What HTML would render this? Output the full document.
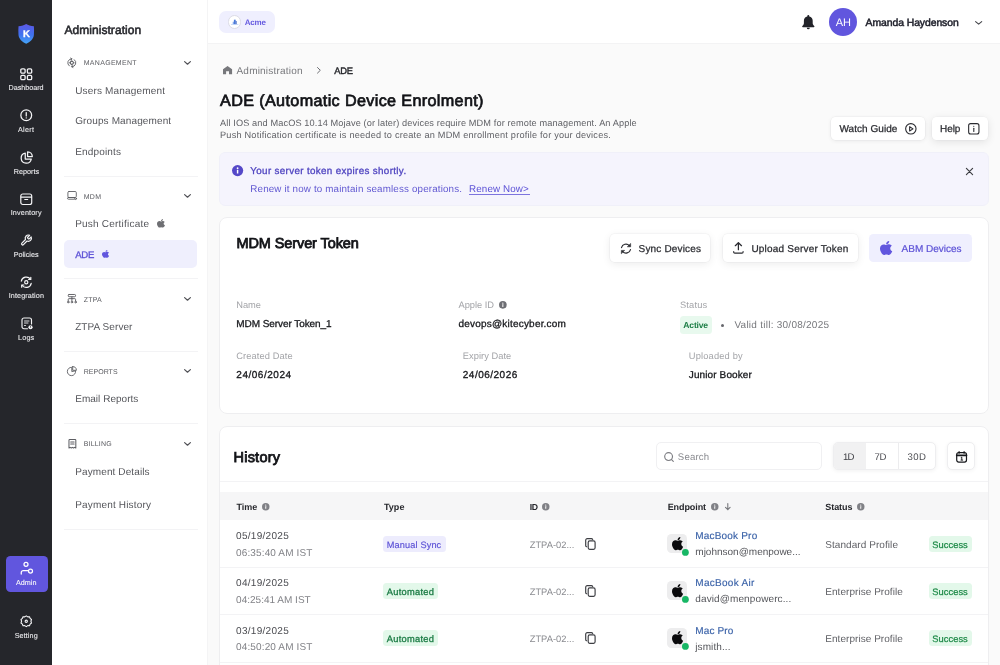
<!DOCTYPE html>
<html lang="en"><head><meta charset="utf-8"><title>ADE (Automatic Device Enrolment)</title>
<style>
*{box-sizing:border-box;margin:0;padding:0}
html,body{text-rendering:geometricPrecision;width:1000px;height:665px;overflow:hidden;background:#fafafa;font-family:"Liberation Sans",sans-serif;color:#1d1d22}
.a{position:absolute;white-space:nowrap;line-height:1}
svg{position:absolute;overflow:visible}
.btn{position:absolute;background:#fff;border-radius:4.5px;box-shadow:0 0 0 .6px rgba(20,20,45,.05),0 1px 4px rgba(0,0,0,.07)}
.card{position:absolute;background:#fff;border:1px solid #eeeef0;border-radius:8px}
#app{position:absolute;left:0;top:0;width:1000px;height:665px;will-change:transform}

</style></head><body>
<div id="app">
<div style="position:absolute;left:0;top:0;width:52px;height:665px;background:#25262b">
<svg style="left:18px;top:23.5px" width="16.4" height="19.8" viewBox="0 0 164 198"><defs><linearGradient id="lg" x1="0" y1="0" x2="0" y2="1"><stop offset="0" stop-color="#5d58e6"/><stop offset=".55" stop-color="#3f72ef"/><stop offset="1" stop-color="#45a6f8"/></linearGradient></defs><path d="M82 0C64 13 36 20 5 22C3 50 3 80 5 110C9 150 42 178 82 198C122 178 155 150 159 110C161 80 161 50 159 22C128 20 100 13 82 0Z" fill="url(#lg)"/></svg>

<!-- Dashboard -->
<svg style="left:20px;top:67.5px" width="12.5" height="12.5" viewBox="0 0 25 25" fill="none" stroke="#f4f4f6" stroke-width="2.6"><rect x="1.6" y="1.6" width="8.6" height="8.6" rx="2.4"/><rect x="14.8" y="1.6" width="8.6" height="8.6" rx="2.4"/><rect x="1.6" y="14.8" width="8.6" height="8.6" rx="2.4"/><rect x="14.8" y="14.8" width="8.6" height="8.6" rx="2.4"/></svg>
<!-- Alert -->
<svg style="left:20px;top:109px" width="12.5" height="12.5" viewBox="0 0 25 25" fill="none" stroke="#f4f4f6" stroke-width="2.5" stroke-linecap="round"><circle cx="12.5" cy="12.5" r="10.8"/><path d="M12.5 7.2v6.6"/><path d="M12.5 17.6v.2"/></svg>
<!-- Reports -->
<svg style="left:20px;top:150.5px" width="13" height="13" viewBox="0 0 26 26" fill="none" stroke="#f4f4f6" stroke-width="2.5" stroke-linecap="round" stroke-linejoin="round"><path d="M10.5 4.2A10.2 10.2 0 1 0 22.6 16H10.5z"/><path d="M15.2 1.6v9.6h9.4A9.6 9.6 0 0 0 15.2 1.6z"/></svg>
<!-- Inventory -->
<svg style="left:20px;top:192.700px" width="12.5" height="12.5" viewBox="0 0 25 25" fill="none" stroke="#f4f4f6" stroke-width="2.4" stroke-linecap="round" stroke-linejoin="round"><rect x="1.6" y="2" width="21.8" height="21" rx="4"/><path d="M2 8.2h21"/><path d="M9.6 13h5.8"/></svg>
<!-- Policies -->
<svg style="left:20px;top:234px" width="12.5" height="12.5" viewBox="0 0 24 24" fill="none" stroke="#f4f4f6" stroke-width="2.3" stroke-linecap="round" stroke-linejoin="round"><path d="M14.7 6.3a1 1 0 0 0 0 1.4l1.6 1.6a1 1 0 0 0 1.4 0l3.77-3.77a6 6 0 0 1-7.94 7.94l-6.91 6.91a2.12 2.12 0 0 1-3-3l6.91-6.91a6 6 0 0 1 7.94-7.94l-3.76 3.76z"/></svg>
<!-- Integration -->
<svg style="left:20px;top:275.5px" width="12.5" height="12.5" viewBox="0 0 25 25" fill="none" stroke="#f4f4f6" stroke-width="2.4" stroke-linecap="round" stroke-linejoin="round"><path d="M2.6 10.400A10.200 10.200 0 0 1 21 6.500"/><path d="M22.400 14.600A10.200 10.200 0 0 1 4 18.500"/><path d="M21.600 2.600v4.400h-4.400"/><path d="M3.400 22.400V18h4.400"/><circle cx="12.500" cy="12.500" r="3.200"/></svg>
<!-- Logs -->
<svg style="left:20.500px;top:317px" width="12.500" height="13" viewBox="0 0 25 26" fill="none" stroke="#f4f4f6" stroke-width="2.300" stroke-linecap="round" stroke-linejoin="round"><path d="M13 23.500H6a4 4 0 0 1-4-4V6a4 4 0 0 1 4-4h11a4 4 0 0 1 4 4v8"/><path d="M7 8h9M7 12h7M7 17h2" stroke-width="1.800"/><circle cx="19" cy="20.500" r="4.200" fill="#f4f4f6" stroke="none"/><path d="M19 18.500v2.200" stroke="#25262b" stroke-width="1.300"/></svg>
<!-- Admin -->
<div style="position:absolute;left:6px;top:556px;width:41.500px;height:36px;border-radius:4.500px;background:#6156de"></div>
<svg style="left:19.500px;top:561px" width="14" height="14" viewBox="0 0 28 28" fill="none" stroke="#fff" stroke-width="2.500" stroke-linecap="round" stroke-linejoin="round"><circle cx="12" cy="6.500" r="4"/><circle cx="21" cy="20" r="4"/><path d="M2.500 26v-3a4 4 0 0 1 4-4h10"/></svg>
<!-- Setting -->
<svg style="left:20px;top:614.800px" width="12.500" height="12.500" viewBox="0 0 25 25" fill="none" stroke="#f4f4f6" stroke-width="2.200" stroke-linejoin="round"><path d="M12.500 1.800l3 1.900 3.500-.2 1.200 3.300 2.800 2.100-1.100 3.600 1.100 3.600-2.800 2.100-1.200 3.300-3.500-.2-3 1.900-3-1.900-3.500.2-1.200-3.300-2.800-2.100 1.100-3.600-1.100-3.600 2.800-2.100 1.200-3.300 3.500.2z"/><circle cx="12.500" cy="12.500" r="2.300"/></svg>
</div><span class="a" style="left:22.9px;top:30px;font-size:9.6px;color:#fff;font-weight:700;-webkit-text-stroke:.3px #fff;">K</span><span class="a" style="left:8.5px;top:84px;font-size:7.2px;color:#ececef;letter-spacing:-0.020px;-webkit-text-stroke:.1px #ececef;">Dashboard</span><span class="a" style="left:18px;top:126px;font-size:7.2px;color:#ececef;letter-spacing:0.315px;-webkit-text-stroke:.1px #ececef;">Alert</span><span class="a" style="left:13.7px;top:168px;font-size:7.2px;color:#ececef;letter-spacing:0.050px;-webkit-text-stroke:.1px #ececef;">Reports</span><span class="a" style="left:10.7px;top:209px;font-size:7.2px;color:#ececef;letter-spacing:0.156px;-webkit-text-stroke:.1px #ececef;">Inventory</span><span class="a" style="left:13.7px;top:251px;font-size:7.2px;color:#ececef;letter-spacing:0.016px;-webkit-text-stroke:.1px #ececef;">Policies</span><span class="a" style="left:8.7px;top:292px;font-size:7.2px;color:#ececef;letter-spacing:0.127px;-webkit-text-stroke:.1px #ececef;">Integration</span><span class="a" style="left:18.1px;top:334px;font-size:7.2px;color:#ececef;letter-spacing:0.145px;-webkit-text-stroke:.1px #ececef;">Logs</span><span class="a" style="left:16px;top:579px;font-size:7.2px;color:#fff;letter-spacing:0.006px;-webkit-text-stroke:.1px #ececef;">Admin</span><span class="a" style="left:14.7px;top:632px;font-size:7.2px;color:#ececef;letter-spacing:0.094px;-webkit-text-stroke:.1px #ececef;">Setting</span><div style="position:absolute;left:52px;top:0;width:156px;height:665px;background:#fff;border-right:1px solid #f4f4f5"></div><span class="a" style="left:64.4px;top:24px;font-size:12px;color:#26272c;letter-spacing:0.057px;-webkit-text-stroke:.55px #26272c;">Administration</span><svg style="left:67.200px;top:57.700px" width="9.600" height="9.600" viewBox="0 0 20 20" fill="none" stroke="#5c5d62" stroke-linecap="round" stroke-linejoin="round" stroke-width="1.900"><path d="M10 1.700A8.300 8.300 0 0 0 4.800 16.500"/><path d="M10 18.300A8.300 8.300 0 0 0 15.200 3.500"/><path d="M7.600 .2L10.200 1.700 8.400 4"/><path d="M12.400 19.800L9.800 18.300l1.800-2.300"/><circle cx="10" cy="10" r="3.300" stroke-width="2.200"/><path d="M10 5v1.600M10 13.400V15M5 10h1.600M13.400 10H15" stroke-width="1.600"/></svg><span class="a" style="left:83.7px;top:60px;font-size:7px;color:#5a5b60;letter-spacing:0.308px;">MANAGEMENT</span><svg style="left:184.1px;top:60.9px" width="7" height="3.8" viewBox="0 0 7 3.8" fill="none" stroke="#505156" stroke-width="1.2" stroke-linecap="round" stroke-linejoin="round"><path d="M.6 .6L3.5 3.2L6.4 .6"/></svg><span class="a" style="left:75.2px;top:87px;font-size:10px;color:#55565b;letter-spacing:0.164px;">Users Management</span><span class="a" style="left:75.2px;top:117px;font-size:10px;color:#55565b;letter-spacing:0.124px;">Groups Management</span><span class="a" style="left:75.2px;top:148px;font-size:10px;color:#55565b;letter-spacing:0.167px;">Endpoints</span><div style="position:absolute;left:64px;top:175.6px;width:133.5px;height:1px;background:#f3f3f5;border-radius:0px;"></div><svg style="left:67px;top:191.400px" width="10" height="9" viewBox="0 0 20 18" fill="none" stroke="#5c5d62" stroke-linecap="round" stroke-linejoin="round" stroke-width="1.800"><rect x="1.800" y="1" width="16.800" height="12" rx="2.200"/><rect x="1" y="13" width="15.500" height="3.400" rx="1.700"/><circle cx="17.300" cy="15.300" r="1.800" fill="#fff"/></svg><span class="a" style="left:83.7px;top:194px;font-size:7px;color:#5a5b60;letter-spacing:0.353px;">MDM</span><svg style="left:184.1px;top:194.3px" width="7" height="3.8" viewBox="0 0 7 3.8" fill="none" stroke="#505156" stroke-width="1.2" stroke-linecap="round" stroke-linejoin="round"><path d="M.6 .6L3.5 3.2L6.4 .6"/></svg><span class="a" style="left:75.2px;top:220px;font-size:10px;color:#55565b;letter-spacing:0.213px;">Push Certificate</span><svg style="left:157.3px;top:219.2px" width="7.8" height="8.6" viewBox="4 32 368.6 448" preserveAspectRatio="none"><path fill="#6e6f73" d="M318.7 268.7c-.2-36.700 16.400-64.400 50-84.800-18.800-26.900-47.200-41.700-84.700-44.600-35.500-2.800-74.300 20.700-88.500 20.700-15 0-49.400-19.700-76.400-19.700C63.300 141.200 4 184.800 4 273.500q0 39.300 14.400 81.200c12.800 36.700 59 126.700 107.200 125.200 25.200-.6 43-17.900 75.800-17.900 31.800 0 48.300 17.900 76.400 17.900 48.600-.7 90.400-82.500 102.600-119.300-65.200-30.700-61.700-90-61.700-91.900zm-56.600-164.200c27.300-32.400 24.800-61.900 24-72.500-24.100 1.400-52 16.400-67.900 34.900-17.500 19.800-27.800 44.300-25.600 71.900 26.100 2 49.900-11.400 69.500-34.300z"/></svg><div style="position:absolute;left:64.3px;top:240.2px;width:132.8px;height:28px;background:#efeffd;border-radius:5px;"></div><span class="a" style="left:75.2px;top:251px;font-size:9.6px;color:#5b50d6;letter-spacing:-0.214px;-webkit-text-stroke:.3px #5b50d6;">ADE</span><svg style="left:102px;top:250px" width="7" height="7.8" viewBox="4 32 368.6 448" preserveAspectRatio="none"><path fill="#6156de" d="M318.7 268.7c-.2-36.700 16.400-64.400 50-84.800-18.800-26.900-47.200-41.700-84.700-44.600-35.500-2.800-74.300 20.700-88.500 20.700-15 0-49.400-19.700-76.400-19.700C63.300 141.200 4 184.800 4 273.500q0 39.300 14.400 81.200c12.800 36.700 59 126.700 107.200 125.200 25.200-.6 43-17.900 75.800-17.900 31.800 0 48.300 17.900 76.400 17.900 48.600-.7 90.400-82.500 102.600-119.300-65.200-30.700-61.700-90-61.700-91.900zm-56.600-164.200c27.300-32.400 24.800-61.900 24-72.500-24.100 1.400-52 16.400-67.900 34.900-17.500 19.800-27.800 44.300-25.600 71.900 26.100 2 49.900-11.400 69.500-34.300z"/></svg><div style="position:absolute;left:64px;top:278.4px;width:133.5px;height:1px;background:#f3f3f5;border-radius:0px;"></div><svg style="left:67.200px;top:294.100px" width="9.800" height="9.600" viewBox="0 0 20 19.600" fill="none" stroke="#5c5d62" stroke-linecap="round" stroke-linejoin="round" stroke-width="1.900"><rect x="2.600" y="1" width="14.800" height="4.600" rx="1.600"/><path d="M10 5.500v4M2.500 14v-3a1.500 1.500 0 0 1 1.500-1.500h12a1.500 1.500 0 0 1 1.500 1.500v3M10 9.500V14"/><circle cx="2.500" cy="16.500" r="1.600"/><circle cx="10" cy="16.500" r="1.600"/><circle cx="17.500" cy="16.500" r="1.600"/></svg><span class="a" style="left:83.7px;top:297px;font-size:7px;color:#5a5b60;letter-spacing:0.236px;">ZTPA</span><svg style="left:184.1px;top:297.4px" width="7" height="3.8" viewBox="0 0 7 3.8" fill="none" stroke="#505156" stroke-width="1.2" stroke-linecap="round" stroke-linejoin="round"><path d="M.6 .6L3.5 3.2L6.4 .6"/></svg><span class="a" style="left:75.2px;top:323px;font-size:10px;color:#55565b;letter-spacing:0.076px;">ZTPA Server</span><div style="position:absolute;left:64px;top:350.7px;width:133.5px;height:1px;background:#f3f3f5;border-radius:0px;"></div><svg style="left:67px;top:366.200px" width="10" height="10" viewBox="0 0 20 20" fill="none" stroke="#5c5d62" stroke-linecap="round" stroke-linejoin="round" stroke-width="1.800"><path d="M17.300 10.400A8.300 8.300 0 1 1 9.600 2.700V10.400z"/><path d="M11.400 1.200v7.400h7.400A7.400 7.400 0 0 0 11.400 1.200z"/></svg><span class="a" style="left:83.7px;top:369px;font-size:7px;color:#5a5b60;letter-spacing:0.028px;">REPORTS</span><svg style="left:184.1px;top:369.4px" width="7" height="3.8" viewBox="0 0 7 3.8" fill="none" stroke="#505156" stroke-width="1.2" stroke-linecap="round" stroke-linejoin="round"><path d="M.6 .6L3.5 3.2L6.4 .6"/></svg><span class="a" style="left:75.2px;top:395px;font-size:10px;color:#55565b;letter-spacing:0.031px;">Email Reports</span><div style="position:absolute;left:64px;top:423px;width:133.5px;height:1px;background:#f3f3f5;border-radius:0px;"></div><svg style="left:67.700px;top:438.600px" width="8.800" height="9.600" viewBox="0 0 18 19.600" fill="none" stroke="#5c5d62" stroke-linecap="round" stroke-linejoin="round" stroke-width="2.100"><path d="M2 18.500V2.500A1.500 1.500 0 0 1 3.500 1h11A1.500 1.500 0 0 1 16 2.500v16l-2.300-1.500-2.400 1.500L9 17l-2.300 1.500L4.300 17z"/><path d="M5.500 6h7M5.500 10h7"/></svg><span class="a" style="left:83.7px;top:441px;font-size:7px;color:#5a5b60;letter-spacing:0.191px;">BILLING</span><svg style="left:184.1px;top:441.5px" width="7" height="3.8" viewBox="0 0 7 3.8" fill="none" stroke="#505156" stroke-width="1.2" stroke-linecap="round" stroke-linejoin="round"><path d="M.6 .6L3.5 3.2L6.4 .6"/></svg><span class="a" style="left:75.2px;top:468px;font-size:10px;color:#55565b;letter-spacing:0.116px;">Payment Details</span><span class="a" style="left:75.2px;top:501px;font-size:10px;color:#55565b;letter-spacing:0.168px;">Payment History</span><div style="position:absolute;left:64px;top:528.5px;width:133.5px;height:1px;background:#f3f3f5;border-radius:0px;"></div><div style="position:absolute;left:208px;top:0;width:792px;height:43.500px;background:#fff;border-bottom:1px solid #f3f3f4"></div><div style="position:absolute;left:219px;top:11px;width:56px;height:22.2px;background:#efeffe;border-radius:7px;"></div><div style="position:absolute;left:227.700px;top:15.100px;width:13.600px;height:13.600px;border-radius:50%;background:#fff;border:.8px solid #dcdce6"></div><svg style="left:231px;top:18.600px" width="7.400" height="6.200" viewBox="-1.200 0 14.800 11.600"><rect x="4.600" y="1" width="3.600" height="9" fill="#4a78d8"/><rect x="2.300" y="5" width="2.300" height="5" fill="#7aa0ea"/><rect x="8.200" y="3.600" width="1.800" height="6.400" fill="#2f5cc0"/><rect x="-1.200" y="10" width="14.800" height="1" fill="#9dbcf3"/></svg><span class="a" style="left:244.7px;top:19px;font-size:8px;color:#675ce0;font-weight:700;letter-spacing:-0.199px;">Acme</span><svg style="left:802.200px;top:15.100px" width="12.600" height="14.300" viewBox="0 0 25.200 28.600"><path fill="#222329" d="M12.600 0a2 2 0 0 0-2 2v.9C6.200 3.800 3.800 7.400 3.800 11.500v5.200c0 1.500-.6 2.900-1.600 4L.7 22.200c-.8.800-.2 2.200.9 2.200h22c1.100 0 1.700-1.400.9-2.200L23 20.700c-1-1.100-1.600-2.500-1.600-4v-5.200c0-4.100-2.400-7.700-6.800-8.600V2a2 2 0 0 0-2-2zM9.600 25.600a3 3 0 0 0 6 0z"/></svg><div style="position:absolute;left:829px;top:8px;width:28px;height:28px;background:#6156de;border-radius:14px;"></div><span class="a" style="left:835.8px;top:18px;font-size:11px;color:#fff;letter-spacing:-0.121px;">AH</span><span class="a" style="left:865.6px;top:19px;font-size:10.4px;color:#1e1f2a;letter-spacing:-0.068px;-webkit-text-stroke:.5px #1e1f2a;">Amanda Haydenson</span><svg style="left:974.85px;top:20.5px" width="7.3" height="3.8" viewBox="0 0 7.3 3.8" fill="none" stroke="#44454a" stroke-width="1.1" stroke-linecap="round" stroke-linejoin="round"><path d="M.6 .6L3.65 3.2L6.7 .6"/></svg><svg style="left:223.100px;top:66.300px" width="9.100" height="8.200" viewBox="0 0 18.200 16.400"><path fill="#77787c" d="M9.100 0L0 6.600V16.400h6.200v-6h5.800v6h6.200V6.600z"/></svg><span class="a" style="left:236.5px;top:67px;font-size:10px;color:#77787c;letter-spacing:0.203px;">Administration</span><svg style="left:317.200px;top:67.200px" width="3.800" height="6.600" viewBox="0 0 3.800 6.600" fill="none" stroke="#6a6b70" stroke-width="1" stroke-linecap="round" stroke-linejoin="round"><path d="M.5 .5L3.300 3.300.5 6.100"/></svg><span class="a" style="left:334.3px;top:66px;font-size:9.4px;color:#222328;letter-spacing:-0.233px;-webkit-text-stroke:.35px #222328;">ADE</span><span class="a" style="left:220.1px;top:93px;font-size:16.2px;color:#121317;letter-spacing:0.343px;-webkit-text-stroke:.7px #121317;">ADE (Automatic Device Enrolment)</span><span class="a" style="left:220px;top:119px;font-size:9.2px;color:#606166;letter-spacing:0.117px;">All IOS and MacOS 10.14 Mojave (or later) devices require MDM for remote management. An Apple</span><span class="a" style="left:220px;top:131px;font-size:9.2px;color:#606166;letter-spacing:0.207px;">Push Notification certificate is needed to create an MDM enrollment profile for your devices.</span><div class="btn" style="left:831px;top:117px;width:94px;height:23px"></div><span class="a" style="left:839.4px;top:125px;font-size:10px;color:#2a2b30;letter-spacing:0.054px;-webkit-text-stroke:.25px #2a2b30;">Watch Guide</span><svg style="left:904.600px;top:122.600px" width="11.700" height="11.700" viewBox="0 0 23.400 23.400" fill="none" stroke="#2a2b30" stroke-width="2.200" stroke-linejoin="round"><circle cx="11.700" cy="11.700" r="10.400"/><path d="M9.300 7.400v8.600l6.700-4.300z"/></svg><div class="btn" style="left:932px;top:117px;width:56px;height:23px;box-shadow:0 0 0 .6px rgba(20,20,45,.04),0 2px 9px rgba(0,0,0,.1)"></div><span class="a" style="left:940px;top:125px;font-size:10px;color:#2a2b30;letter-spacing:-0.051px;-webkit-text-stroke:.25px #2a2b30;">Help</span><svg style="left:968px;top:122.600px" width="11.600" height="11.600" viewBox="0 0 23.200 23.200" fill="none" stroke="#2a2b30" stroke-width="2.200" stroke-linejoin="round" stroke-linecap="round"><rect x="1.300" y="1.300" width="20.600" height="20.600" rx="4"/><path d="M11.600 10.600v6.200"/><path d="M11.600 6.400v.3"/></svg><div style="position:absolute;left:219px;top:152px;width:770px;height:54px;background:#f5f4fd;border:1px solid #f0f0f9;border-radius:6px"></div><svg style="left:231.8px;top:164.6px" width="11.2" height="11.2" viewBox="0 0 20 20"><circle cx="10" cy="10" r="10" fill="#5548c8"/><rect x="8.700" y="8.400" width="2.600" height="7" rx=".6" fill="#fff"/><circle cx="10" cy="5.600" r="1.600" fill="#fff"/></svg><span class="a" style="left:250.3px;top:167px;font-size:9.8px;color:#4f44c0;letter-spacing:0.349px;-webkit-text-stroke:.3px #4f44c0;">Your server token expires shortly.</span><span class="a" style="left:250.3px;top:185px;font-size:9.8px;color:#6259d2;letter-spacing:0.158px;">Renew it now to maintain seamless operations.</span><span class="a" style="left:469.1px;top:185px;font-size:9.8px;color:#5b50d6;letter-spacing:0.121px;">Renew Now&gt;</span><div style="position:absolute;left:469px;top:193.5px;width:60.5px;height:0.9px;background:#7d74de;border-radius:0px;"></div><svg style="left:966px;top:168.100px" width="7" height="7" viewBox="0 0 7 7" fill="none" stroke="#3c3d42" stroke-width="1.150" stroke-linecap="round"><path d="M.4 .4l6.200 6.200M6.600 .4L.4 6.600"/></svg><div class="card" style="left:219px;top:217px;width:770px;height:197px"></div><span class="a" style="left:236.4px;top:237px;font-size:14.5px;color:#121317;letter-spacing:-0.092px;-webkit-text-stroke:.8px #121317;">MDM Server Token</span><div class="btn" style="left:610px;top:234px;width:100px;height:28px;box-shadow:0 0 0 .6px rgba(20,20,45,.05),0 2px 8px rgba(0,0,0,.08)"></div><svg style="left:620px;top:243px" width="12" height="11.200" viewBox="0 0 24 22.400" fill="none" stroke="#2a2b30" stroke-width="2.300" stroke-linecap="round" stroke-linejoin="round"><path d="M3 9.300A9.200 9.200 0 0 1 18.600 5.200"/><path d="M21 13.100A9.200 9.200 0 0 1 5.400 17.200"/><path d="M21.300 1.600V7.600h-6z" fill="#2a2b30" stroke-width="1.200"/><path d="M2.700 20.800v-6h6z" fill="#2a2b30" stroke-width="1.200"/></svg><span class="a" style="left:638.6px;top:245px;font-size:10px;color:#2a2b30;letter-spacing:0.158px;-webkit-text-stroke:.25px #2a2b30;">Sync Devices</span><div class="btn" style="left:723px;top:234px;width:135px;height:28px;box-shadow:0 0 0 .6px rgba(20,20,45,.05),0 2px 8px rgba(0,0,0,.08)"></div><svg style="left:733.200px;top:242px" width="10.800" height="11.800" viewBox="0 0 21.600 23.600" fill="none" stroke="#2a2b30" stroke-width="2.500" stroke-linecap="round" stroke-linejoin="round"><path d="M10.800 15.500V2"/><path d="M4.600 7.400l6.200-6 6.200 6"/><path d="M1.400 19v1a2.200 2.200 0 0 0 2.200 2.200h14.400a2.200 2.200 0 0 0 2.200-2.200v-1" stroke-width="2.300"/></svg><span class="a" style="left:751.4px;top:245px;font-size:10px;color:#2a2b30;letter-spacing:0.205px;-webkit-text-stroke:.25px #2a2b30;">Upload Server Token</span><div style="position:absolute;left:869px;top:234px;width:103.4px;height:28px;background:#efeffe;border-radius:4.5px;"></div><svg style="left:880.2px;top:241px" width="12" height="14" viewBox="4 32 368.6 448" preserveAspectRatio="none"><path fill="#6156de" d="M318.7 268.7c-.2-36.700 16.400-64.400 50-84.800-18.800-26.900-47.200-41.700-84.700-44.600-35.500-2.800-74.300 20.700-88.500 20.700-15 0-49.400-19.700-76.400-19.700C63.300 141.200 4 184.800 4 273.500q0 39.300 14.400 81.200c12.800 36.700 59 126.700 107.200 125.200 25.200-.6 43-17.900 75.800-17.900 31.800 0 48.300 17.900 76.400 17.900 48.600-.7 90.400-82.500 102.600-119.300-65.200-30.700-61.700-90-61.700-91.900zm-56.600-164.200c27.300-32.400 24.800-61.900 24-72.500-24.100 1.400-52 16.400-67.900 34.900-17.500 19.800-27.800 44.300-25.600 71.900 26.100 2 49.900-11.400 69.500-34.300z"/></svg><span class="a" style="left:901.6px;top:245px;font-size:10px;color:#5b50d6;-webkit-text-stroke:.2px #5b50d6;">ABM Devices</span><span class="a" style="left:236.3px;top:301px;font-size:9.3px;color:#a3a4a8;letter-spacing:-0.089px;">Name</span><span class="a" style="left:458.5px;top:301px;font-size:9.3px;color:#a3a4a8;letter-spacing:-0.023px;">Apple ID</span><svg style="left:498.75px;top:301.35px" width="7.7" height="7.7" viewBox="0 0 20 20"><circle cx="10" cy="10" r="10" fill="#6e6f74"/><rect x="8.700" y="8.400" width="2.600" height="7" rx=".6" fill="#fff"/><circle cx="10" cy="5.600" r="1.600" fill="#fff"/></svg><span class="a" style="left:679.9px;top:301px;font-size:9.3px;color:#a3a4a8;letter-spacing:0.189px;">Status</span><span class="a" style="left:236.3px;top:320px;font-size:10px;color:#17181c;letter-spacing:-0.070px;-webkit-text-stroke:.3px #17181c;">MDM Server Token_1</span><span class="a" style="left:458.5px;top:320px;font-size:10px;color:#17181c;letter-spacing:0.204px;-webkit-text-stroke:.3px #17181c;">devops@kitecyber.com</span><div style="position:absolute;left:679.7px;top:315.9px;width:31.9px;height:17.8px;background:#e8f9ee;border-radius:3.5px;"></div><span class="a" style="left:683.3px;top:321px;font-size:8.6px;color:#1f7f48;font-weight:700;letter-spacing:-0.199px;">Active</span><svg style="left:721.400px;top:323.800px" width="3" height="3" viewBox="0 0 10 10"><circle cx="5" cy="5" r="5" fill="#66676c"/></svg><span class="a" style="left:734.4px;top:321px;font-size:10px;color:#77787c;letter-spacing:0.255px;">Valid till: 30/08/2025</span><span class="a" style="left:236.3px;top:352px;font-size:9.3px;color:#a3a4a8;letter-spacing:0.096px;">Created Date</span><span class="a" style="left:462.8px;top:352px;font-size:9.3px;color:#a3a4a8;letter-spacing:0.042px;">Expiry Date</span><span class="a" style="left:688.8px;top:352px;font-size:9.3px;color:#a3a4a8;letter-spacing:0.170px;">Uploaded by</span><span class="a" style="left:236.3px;top:371px;font-size:10px;color:#17181c;letter-spacing:0.520px;-webkit-text-stroke:.3px #17181c;">24/06/2024</span><span class="a" style="left:462.8px;top:371px;font-size:10px;color:#17181c;letter-spacing:0.488px;-webkit-text-stroke:.3px #17181c;">24/06/2026</span><span class="a" style="left:688.8px;top:371px;font-size:10px;color:#17181c;letter-spacing:0.112px;-webkit-text-stroke:.3px #17181c;">Junior Booker</span><div class="card" style="left:219px;top:426px;width:770px;height:260px"></div><span class="a" style="left:233.5px;top:451px;font-size:14.5px;color:#121317;letter-spacing:0.227px;-webkit-text-stroke:.8px #121317;">History</span><div style="position:absolute;left:655.600px;top:442px;width:166.200px;height:28px;background:#fff;border:1px solid #f0f0f2;border-radius:5px"></div><svg style="left:663.900px;top:451.600px" width="9.900" height="9.900" viewBox="0 0 19.800 19.800" fill="none" stroke="#7c7d82" stroke-width="2.300" stroke-linecap="round"><circle cx="9.200" cy="9.200" r="7.800"/><path d="M15.200 15.200l3.400 3.400"/></svg><span class="a" style="left:677.8px;top:453px;font-size:9.6px;color:#8a8b90;letter-spacing:0.199px;">Search</span><div style="position:absolute;left:833px;top:442px;width:102.800px;height:28px;background:#fff;border:1px solid #eeeef0;border-radius:5px;box-shadow:0 1px 4px rgba(0,0,0,.06);overflow:hidden"><div style="position:absolute;left:0;top:0;width:31.800px;height:100%;background:#f1f1f2"></div><div style="position:absolute;left:64.200px;top:0;width:1px;height:100%;background:#ececee"></div></div><span class="a" style="left:842.9px;top:453px;font-size:9.6px;color:#3e3f44;letter-spacing:-0.710px;">1D</span><span class="a" style="left:874.4px;top:453px;font-size:9.6px;color:#4e4f54;letter-spacing:-0.110px;">7D</span><span class="a" style="left:907.6px;top:453px;font-size:9.6px;color:#4e4f54;letter-spacing:0.356px;">30D</span><div style="position:absolute;left:947px;top:442px;width:28px;height:28px;background:#fff;border:1px solid #eeeef0;border-radius:5px;box-shadow:0 1px 4px rgba(0,0,0,.05)"></div><svg style="left:955.800px;top:450.600px" width="11.200" height="11.800" viewBox="0 0 22.400 23.600" fill="none" stroke="#17181c" stroke-width="2.400" stroke-linecap="round" stroke-linejoin="round"><rect x="1.400" y="3.400" width="19.600" height="18.800" rx="4"/><path d="M1.400 8.600h19.600" stroke-width="3.400"/><path d="M6.200 1.400v3M16.200 1.400v3"/><path d="M9.600 13.400l2-1.200v5.800M9.200 18.200h5" stroke-width="1.900" stroke-linecap="butt"/></svg><div style="position:absolute;left:220px;top:481.1px;width:768px;height:1px;background:#f3f3f5;border-radius:0px;"></div><div style="position:absolute;left:220px;top:492.4px;width:768px;height:28.1px;background:#f6f6f7;border-radius:0px;"></div><span class="a" style="left:236.4px;top:503px;font-size:9px;color:#26272c;font-weight:700;letter-spacing:0.016px;">Time</span><svg style="left:262.05px;top:502.65px" width="7.5" height="7.5" viewBox="0 0 20 20"><circle cx="10" cy="10" r="10" fill="#808186"/><rect x="8.700" y="8.400" width="2.600" height="7" rx=".6" fill="#fff"/><circle cx="10" cy="5.600" r="1.600" fill="#fff"/></svg><span class="a" style="left:384px;top:503px;font-size:9px;color:#26272c;font-weight:700;letter-spacing:0.016px;">Type</span><span class="a" style="left:529.7px;top:503px;font-size:8.7px;color:#26272c;font-weight:700;letter-spacing:-0.392px;">ID</span><svg style="left:542.25px;top:502.65px" width="7.5" height="7.5" viewBox="0 0 20 20"><circle cx="10" cy="10" r="10" fill="#808186"/><rect x="8.700" y="8.400" width="2.600" height="7" rx=".6" fill="#fff"/><circle cx="10" cy="5.600" r="1.600" fill="#fff"/></svg><span class="a" style="left:667.7px;top:503px;font-size:9px;color:#26272c;font-weight:700;letter-spacing:-0.080px;">Endpoint</span><svg style="left:710.75px;top:502.65px" width="7.5" height="7.5" viewBox="0 0 20 20"><circle cx="10" cy="10" r="10" fill="#808186"/><rect x="8.700" y="8.400" width="2.600" height="7" rx=".6" fill="#fff"/><circle cx="10" cy="5.600" r="1.600" fill="#fff"/></svg><svg style="left:724.800px;top:503.200px" width="5.600" height="7.200" viewBox="0 0 5.600 7.200" fill="none" stroke="#77787c" stroke-width="1.100" stroke-linecap="round" stroke-linejoin="round"><path d="M2.800 .5v6.200M.5 4.300l2.300 2.400 2.300-2.400"/></svg><span class="a" style="left:825.3px;top:503px;font-size:9px;color:#26272c;font-weight:700;letter-spacing:-0.076px;">Status</span><svg style="left:857.25px;top:502.65px" width="7.5" height="7.5" viewBox="0 0 20 20"><circle cx="10" cy="10" r="10" fill="#808186"/><rect x="8.700" y="8.400" width="2.600" height="7" rx=".6" fill="#fff"/><circle cx="10" cy="5.600" r="1.600" fill="#fff"/></svg><span class="a" style="left:236.1px;top:532px;font-size:10px;color:#4a4b50;letter-spacing:0.288px;">05/19/2025</span><span class="a" style="left:236.1px;top:549px;font-size:10px;color:#808186;letter-spacing:0.124px;">06:35:40 AM IST</span><div style="position:absolute;left:383.2px;top:535.7px;width:62.4px;height:16.2px;background:#edecfd;border-radius:3.5px;"></div><span class="a" style="left:386.8px;top:541px;font-size:9.2px;color:#5b50d6;letter-spacing:0.131px;-webkit-text-stroke:.15px #5b50d6;">Manual Sync</span><span class="a" style="left:529.7px;top:541px;font-size:9.3px;color:#8a8b90;letter-spacing:0.035px;">ZTPA-02...</span><svg style="left:585.100px;top:538px" width="10.800" height="12" viewBox="0 0 21.600 24" fill="none" stroke="#3e3f44" stroke-width="2.350" stroke-linejoin="round" stroke-linecap="round"><rect x="6.400" y="5.800" width="13.800" height="16.800" rx="3"/><path d="M3.200 17.500A3 3 0 0 1 1.400 14.800V4.400a3 3 0 0 1 3-3h8.400a3 3 0 0 1 2.600 1.500"/></svg><div style="position:absolute;left:667.2px;top:534px;width:19.6px;height:19.3px;background:#ededee;border-radius:4.5px;"></div><svg style="left:671.8px;top:536.8px" width="10.9" height="13.3" viewBox="4 32 368.6 448" preserveAspectRatio="none"><path fill="#0a0a0c" d="M318.7 268.7c-.2-36.700 16.400-64.400 50-84.800-18.800-26.900-47.200-41.700-84.700-44.600-35.500-2.800-74.300 20.700-88.500 20.700-15 0-49.400-19.700-76.400-19.700C63.300 141.200 4 184.800 4 273.500q0 39.300 14.400 81.200c12.800 36.700 59 126.700 107.200 125.200 25.200-.6 43-17.900 75.800-17.900 31.800 0 48.300 17.900 76.400 17.900 48.600-.7 90.400-82.500 102.600-119.300-65.200-30.700-61.700-90-61.700-91.900zm-56.600-164.200c27.300-32.400 24.800-61.900 24-72.500-24.100 1.400-52 16.400-67.900 34.900-17.500 19.800-27.800 44.300-25.600 71.900 26.100 2 49.900-11.400 69.500-34.300z"/></svg><svg style="left:682px;top:549px" width="6.800" height="6.800" viewBox="0 0 10 10"><circle cx="5" cy="5" r="5" fill="#18b765"/></svg><span class="a" style="left:695.3px;top:532px;font-size:10px;color:#3a62a8;letter-spacing:0.188px;-webkit-text-stroke:.15px #3a62a8;">MacBook Pro</span><span class="a" style="left:695.3px;top:548px;font-size:10px;color:#55565b;">mjohnson@menpowe...</span><span class="a" style="left:825.3px;top:541px;font-size:10px;color:#606166;letter-spacing:0.063px;">Standard Profile</span><div style="position:absolute;left:928.5px;top:536.1px;width:43.9px;height:15.8px;background:#e3f8ea;border-radius:3.5px;"></div><span class="a" style="left:932.3px;top:541px;font-size:9.3px;color:#1e8a48;letter-spacing:0.055px;-webkit-text-stroke:.25px #1e8a48;">Success</span><div style="position:absolute;left:220px;top:567.3px;width:768px;height:1px;background:#f3f3f5;border-radius:0px;"></div><span class="a" style="left:236.1px;top:579px;font-size:10px;color:#4a4b50;letter-spacing:0.288px;">04/19/2025</span><span class="a" style="left:236.1px;top:596px;font-size:10px;color:#808186;letter-spacing:0.007px;">04:25:41 AM IST</span><div style="position:absolute;left:383.2px;top:582.85px;width:54.7px;height:16.2px;background:#e3f8ea;border-radius:3.5px;"></div><span class="a" style="left:386.8px;top:588px;font-size:9.3px;color:#1c7c45;letter-spacing:0.263px;-webkit-text-stroke:.3px #1c7c45;">Automated</span><span class="a" style="left:529.7px;top:588px;font-size:9.3px;color:#8a8b90;letter-spacing:0.035px;">ZTPA-02...</span><svg style="left:585.100px;top:585.15px" width="10.800" height="12" viewBox="0 0 21.600 24" fill="none" stroke="#3e3f44" stroke-width="2.350" stroke-linejoin="round" stroke-linecap="round"><rect x="6.400" y="5.800" width="13.800" height="16.800" rx="3"/><path d="M3.200 17.500A3 3 0 0 1 1.400 14.800V4.400a3 3 0 0 1 3-3h8.400a3 3 0 0 1 2.600 1.500"/></svg><div style="position:absolute;left:667.2px;top:581.15px;width:19.6px;height:19.3px;background:#ededee;border-radius:4.5px;"></div><svg style="left:671.8px;top:583.95px" width="10.9" height="13.3" viewBox="4 32 368.6 448" preserveAspectRatio="none"><path fill="#0a0a0c" d="M318.7 268.7c-.2-36.700 16.400-64.400 50-84.800-18.800-26.900-47.200-41.700-84.700-44.600-35.500-2.800-74.300 20.700-88.500 20.700-15 0-49.400-19.700-76.400-19.700C63.300 141.200 4 184.800 4 273.500q0 39.300 14.400 81.200c12.800 36.700 59 126.700 107.200 125.200 25.200-.6 43-17.900 75.800-17.900 31.800 0 48.300 17.900 76.400 17.900 48.600-.7 90.400-82.500 102.600-119.300-65.200-30.700-61.700-90-61.700-91.900zm-56.600-164.200c27.300-32.400 24.800-61.900 24-72.500-24.100 1.400-52 16.400-67.900 34.900-17.500 19.800-27.800 44.300-25.600 71.900 26.100 2 49.900-11.400 69.500-34.300z"/></svg><svg style="left:682px;top:596.15px" width="6.800" height="6.800" viewBox="0 0 10 10"><circle cx="5" cy="5" r="5" fill="#18b765"/></svg><span class="a" style="left:695.3px;top:579px;font-size:10px;color:#3a62a8;letter-spacing:0.291px;-webkit-text-stroke:.15px #3a62a8;">MacBook Air</span><span class="a" style="left:695.3px;top:595px;font-size:10px;color:#55565b;letter-spacing:0.109px;">david@menpowerc...</span><span class="a" style="left:825.3px;top:588px;font-size:10px;color:#606166;letter-spacing:0.046px;">Enterprise Profile</span><div style="position:absolute;left:928.5px;top:583.25px;width:43.9px;height:15.8px;background:#e3f8ea;border-radius:3.5px;"></div><span class="a" style="left:932.3px;top:588px;font-size:9.3px;color:#1e8a48;letter-spacing:0.055px;-webkit-text-stroke:.25px #1e8a48;">Success</span><div style="position:absolute;left:220px;top:614.45px;width:768px;height:1px;background:#f3f3f5;border-radius:0px;"></div><span class="a" style="left:236.1px;top:627px;font-size:10px;color:#4a4b50;letter-spacing:0.288px;">03/19/2025</span><span class="a" style="left:236.1px;top:643px;font-size:10px;color:#808186;letter-spacing:0.124px;">04:50:20 AM IST</span><div style="position:absolute;left:383.2px;top:630px;width:54.7px;height:16.2px;background:#e3f8ea;border-radius:3.5px;"></div><span class="a" style="left:386.8px;top:635px;font-size:9.3px;color:#1c7c45;letter-spacing:0.263px;-webkit-text-stroke:.3px #1c7c45;">Automated</span><span class="a" style="left:529.7px;top:635px;font-size:9.3px;color:#8a8b90;letter-spacing:0.035px;">ZTPA-02...</span><svg style="left:585.100px;top:632.3px" width="10.800" height="12" viewBox="0 0 21.600 24" fill="none" stroke="#3e3f44" stroke-width="2.350" stroke-linejoin="round" stroke-linecap="round"><rect x="6.400" y="5.800" width="13.800" height="16.800" rx="3"/><path d="M3.200 17.500A3 3 0 0 1 1.400 14.800V4.400a3 3 0 0 1 3-3h8.400a3 3 0 0 1 2.600 1.500"/></svg><div style="position:absolute;left:667.2px;top:628.3px;width:19.6px;height:19.3px;background:#ededee;border-radius:4.5px;"></div><svg style="left:671.8px;top:631.1px" width="10.9" height="13.3" viewBox="4 32 368.6 448" preserveAspectRatio="none"><path fill="#0a0a0c" d="M318.7 268.7c-.2-36.700 16.400-64.400 50-84.800-18.800-26.900-47.200-41.700-84.700-44.600-35.500-2.800-74.300 20.700-88.500 20.700-15 0-49.400-19.700-76.400-19.700C63.300 141.200 4 184.800 4 273.500q0 39.300 14.400 81.200c12.800 36.700 59 126.700 107.200 125.200 25.200-.6 43-17.900 75.800-17.900 31.800 0 48.300 17.900 76.400 17.900 48.600-.7 90.400-82.500 102.600-119.300-65.200-30.700-61.700-90-61.700-91.900zm-56.600-164.200c27.300-32.400 24.800-61.900 24-72.500-24.100 1.400-52 16.400-67.900 34.900-17.500 19.800-27.800 44.300-25.600 71.900 26.100 2 49.900-11.400 69.500-34.300z"/></svg><svg style="left:682px;top:643.3px" width="6.800" height="6.800" viewBox="0 0 10 10"><circle cx="5" cy="5" r="5" fill="#18b765"/></svg><span class="a" style="left:695.3px;top:627px;font-size:10px;color:#3a62a8;letter-spacing:0.118px;-webkit-text-stroke:.15px #3a62a8;">Mac Pro</span><span class="a" style="left:695.3px;top:643px;font-size:10px;color:#55565b;letter-spacing:0.088px;">jsmith...</span><span class="a" style="left:825.3px;top:635px;font-size:10px;color:#606166;letter-spacing:0.046px;">Enterprise Profile</span><div style="position:absolute;left:928.5px;top:630.4px;width:43.9px;height:15.8px;background:#e3f8ea;border-radius:3.5px;"></div><span class="a" style="left:932.3px;top:635px;font-size:9.3px;color:#1e8a48;letter-spacing:0.055px;-webkit-text-stroke:.25px #1e8a48;">Success</span><div style="position:absolute;left:220px;top:661.6px;width:768px;height:1px;background:#f3f3f5;border-radius:0px;"></div>
</div>
</body></html>
